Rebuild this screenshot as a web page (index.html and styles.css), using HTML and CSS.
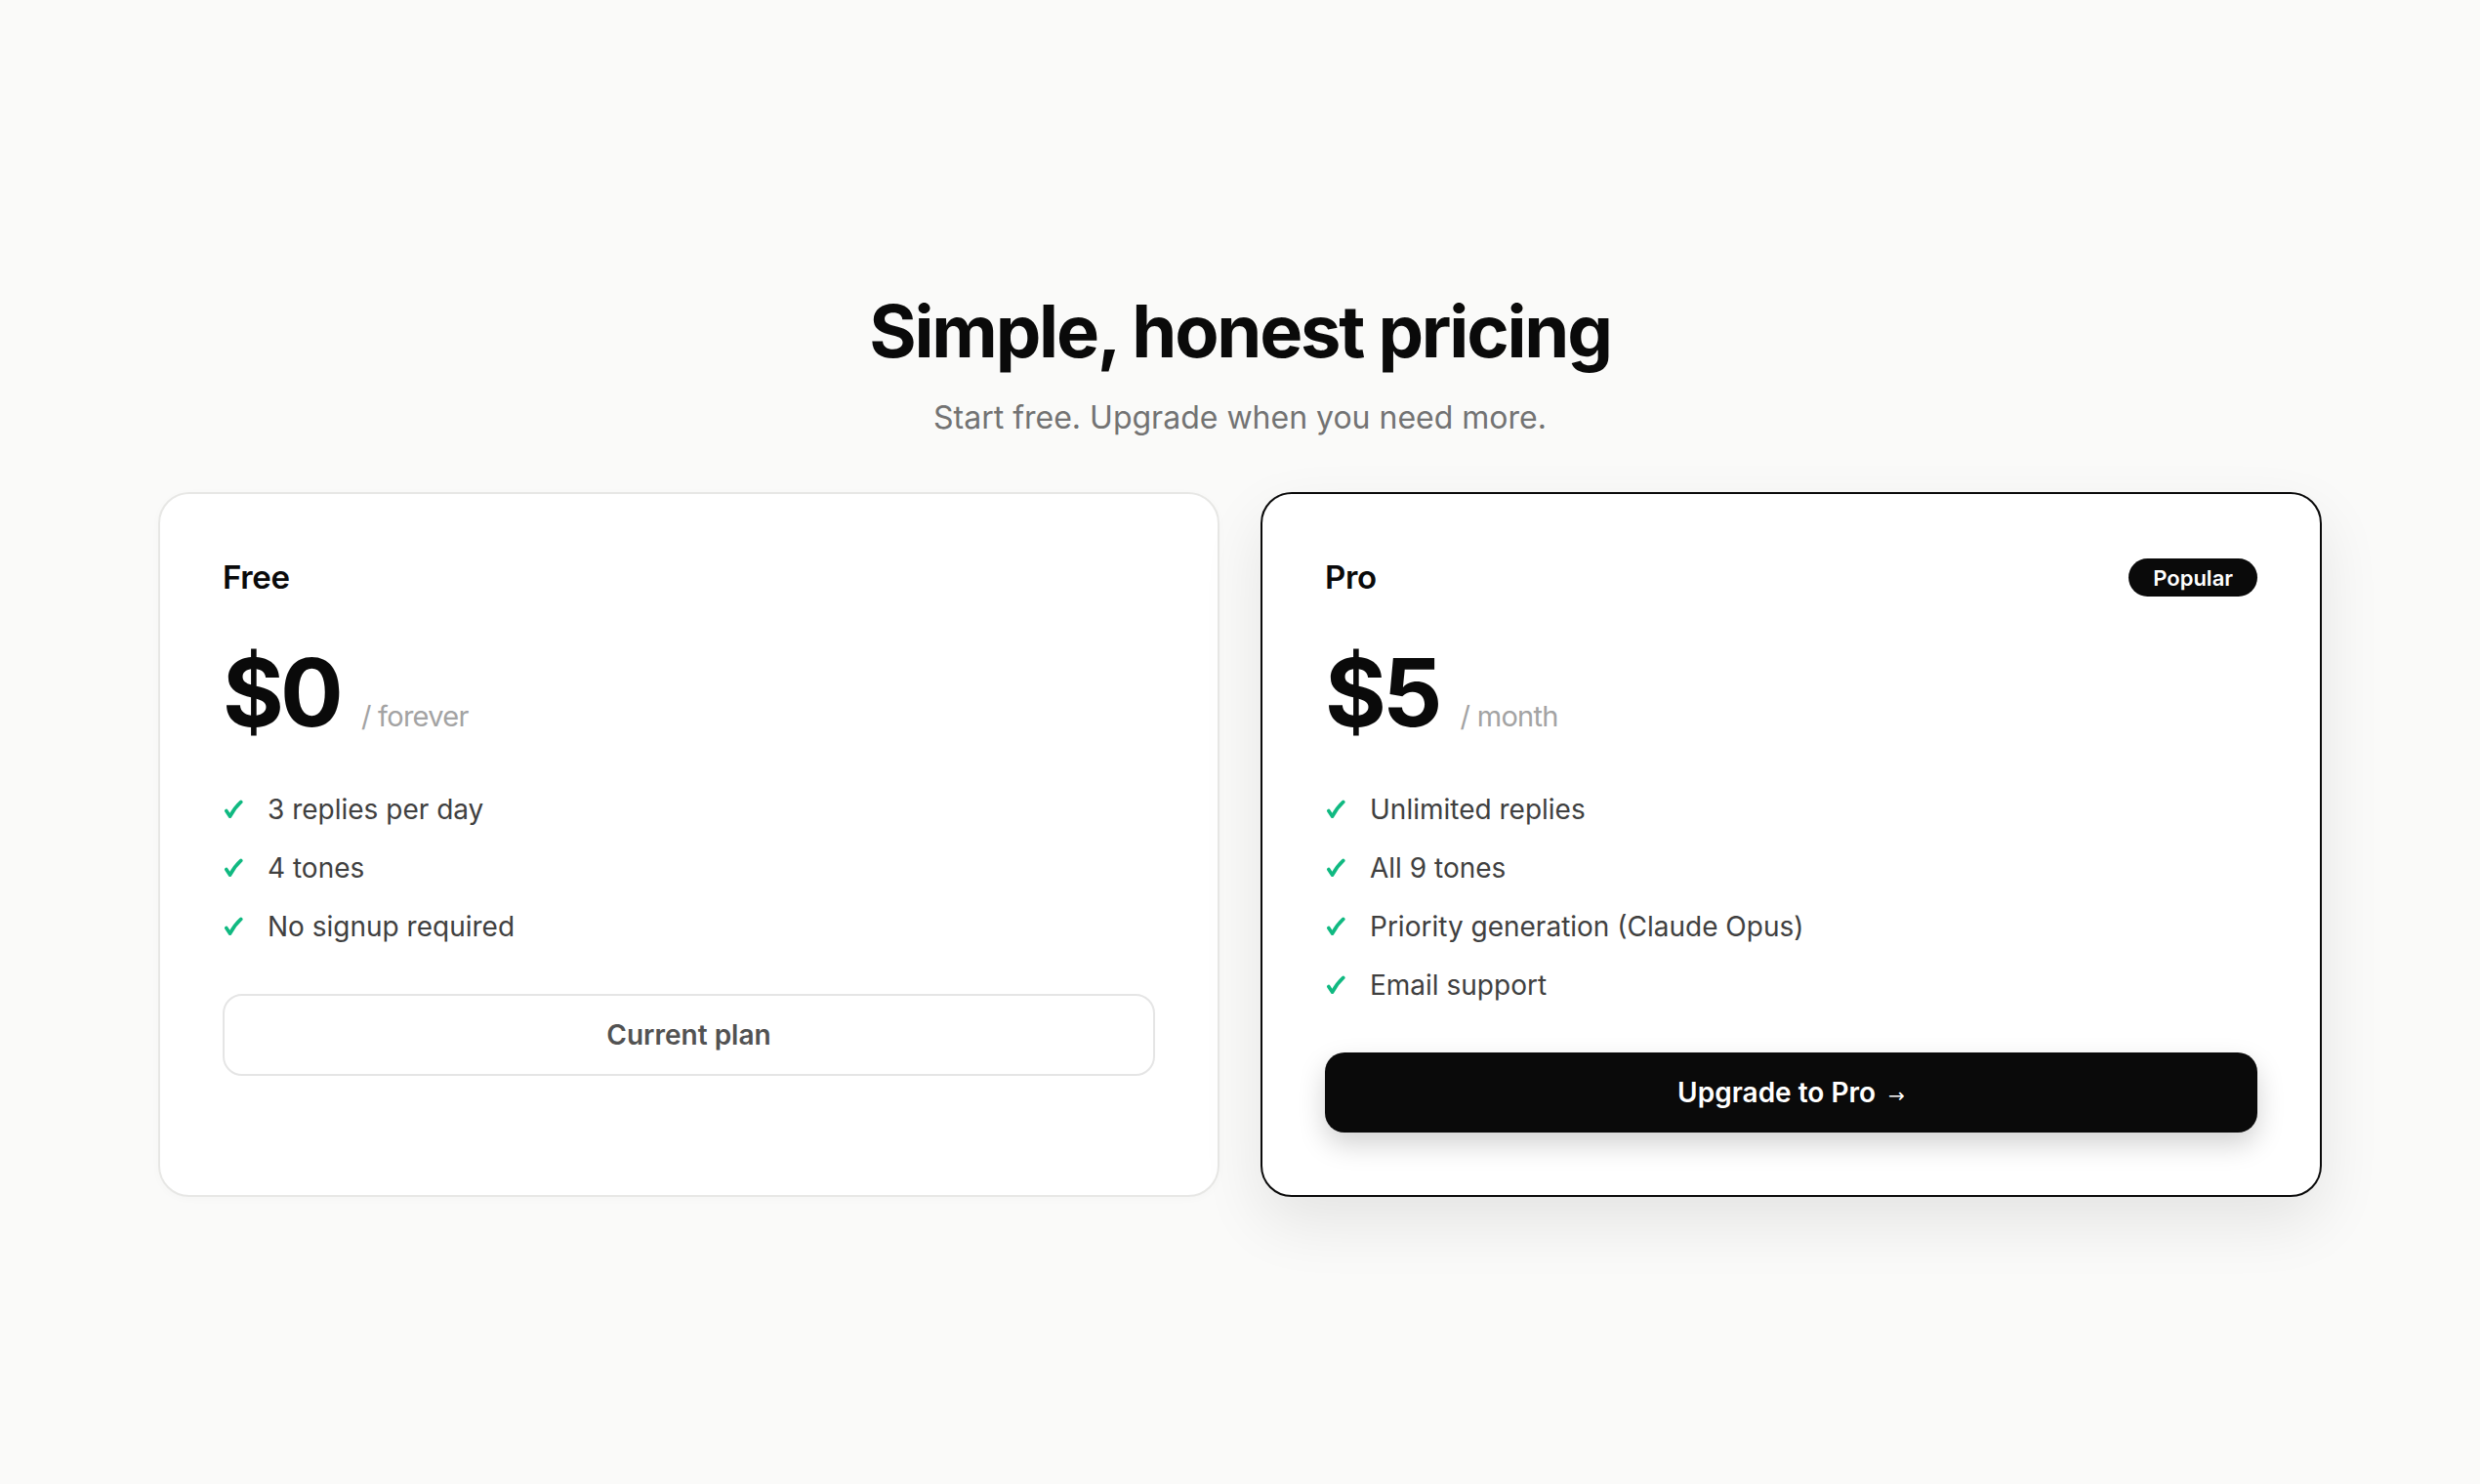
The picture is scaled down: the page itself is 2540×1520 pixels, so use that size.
FILE: index.html
```html
<!DOCTYPE html>
<html lang="en">
<head>
<meta charset="utf-8">
<title>Pricing</title>
<link rel="stylesheet" href="styles.css">
</head>
<body>
  <main class="page">
    <header class="intro">
      <h1 class="title">Simple, honest pricing</h1>
      <p class="subtitle">Start free. Upgrade when you need more.</p>
    </header>

    <section class="plans">
      <article class="card">
        <div class="card-head">
          <h2 class="plan-name">Free</h2>
        </div>
        <div class="price">
          <span class="amount">$0</span>
          <span class="period">/ forever</span>
        </div>
        <ul class="features">
          <li><svg class="check" viewBox="0 0 20 20" aria-hidden="true"><path d="M2.8 11.4 L6.6 17.2 Q11 8.5 17.8 2.4"/></svg><span>3 replies per day</span></li>
          <li><svg class="check" viewBox="0 0 20 20" aria-hidden="true"><path d="M2.8 11.4 L6.6 17.2 Q11 8.5 17.8 2.4"/></svg><span>4 tones</span></li>
          <li><svg class="check" viewBox="0 0 20 20" aria-hidden="true"><path d="M2.8 11.4 L6.6 17.2 Q11 8.5 17.8 2.4"/></svg><span>No signup required</span></li>
        </ul>
        <button class="btn btn-outline" type="button">Current plan</button>
      </article>

      <article class="card card-pro">
        <div class="card-head">
          <h2 class="plan-name">Pro</h2>
          <span class="badge">Popular</span>
        </div>
        <div class="price">
          <span class="amount">$5</span>
          <span class="period">/ month</span>
        </div>
        <ul class="features">
          <li><svg class="check" viewBox="0 0 20 20" aria-hidden="true"><path d="M2.8 11.4 L6.6 17.2 Q11 8.5 17.8 2.4"/></svg><span>Unlimited replies</span></li>
          <li><svg class="check" viewBox="0 0 20 20" aria-hidden="true"><path d="M2.8 11.4 L6.6 17.2 Q11 8.5 17.8 2.4"/></svg><span>All 9 tones</span></li>
          <li><svg class="check" viewBox="0 0 20 20" aria-hidden="true"><path d="M2.8 11.4 L6.6 17.2 Q11 8.5 17.8 2.4"/></svg><span>Priority generation (Claude Opus)</span></li>
          <li><svg class="check" viewBox="0 0 20 20" aria-hidden="true"><path d="M2.8 11.4 L6.6 17.2 Q11 8.5 17.8 2.4"/></svg><span>Email support</span></li>
        </ul>
        <button class="btn btn-solid" type="button">Upgrade to Pro <span class="arrow">→</span></button>
      </article>
    </section>
  </main>
</body>
</html>
```

FILE: styles.css
```css
* { box-sizing: border-box; }

html, body {
  margin: 0;
  padding: 0;
  background: #fafaf9;
}

body {
  font-family: Inter, "Noto Sans", "Liberation Sans", sans-serif;
  color: #0a0a0a;
  min-height: 1520px;
}

.page {
  width: 2216px;
  margin: 0 auto;
  padding-top: 299px;
}

.intro {
  text-align: center;
}

.title {
  margin: 0;
  font-size: 74px;
  line-height: 81px;
  font-weight: 700;
  letter-spacing: -0.03em;
  color: #0a0a0a;
}

.subtitle {
  margin: 25px 0 0;
  font-size: 32px;
  line-height: 46px;
  font-weight: 400;
  color: #737373;
}

.plans {
  margin-top: 53px;
  display: grid;
  grid-template-columns: 1fr 1fr;
  gap: 42px;
}

.card {
  background: #ffffff;
  border: 2px solid #e7e7e5;
  border-radius: 32px;
  padding: 64px;
  display: flex;
  flex-direction: column;
  box-shadow: 0 2px 10px rgba(0, 0, 0, 0.025);
}

.card-pro {
  border-color: #0a0a0a;
  box-shadow: 0 26px 64px rgba(0, 0, 0, 0.09);
}

.card-head {
  display: flex;
  align-items: center;
  justify-content: space-between;
  height: 43px;
}

.plan-name {
  margin: 0;
  font-size: 33px;
  line-height: 43px;
  font-weight: 600;
  letter-spacing: -0.01em;
  color: #0a0a0a;
}

.badge {
  display: inline-flex;
  align-items: center;
  height: 39px;
  padding: 0 25px;
  border-radius: 999px;
  background: #0a0a0a;
  color: #ffffff;
  font-size: 22px;
  font-weight: 600;
}

.price {
  margin-top: 48px;
  display: flex;
  align-items: baseline;
}

.amount {
  font-size: 96px;
  line-height: 96px;
  font-weight: 700;
  letter-spacing: -0.04em;
  color: #0a0a0a;
}

.period {
  margin-left: 22px;
  font-size: 29px;
  font-weight: 400;
  letter-spacing: -0.025em;
  color: #a3a3a3;
}

.features {
  list-style: none;
  margin: 51px 0 0;
  padding: 0;
  display: flex;
  flex-direction: column;
  gap: 18px;
}

.features li {
  display: flex;
  align-items: center;
  height: 42px;
  font-size: 28px;
  line-height: 42px;
  color: #404040;
}

.check {
  width: 20px;
  height: 20px;
  flex: none;
  margin-left: 1px;
  margin-right: 25px;
  fill: none;
  stroke: #10b981;
  stroke-width: 3.6;
  stroke-linecap: round;
  stroke-linejoin: round;
}

.btn {
  margin-top: 48px;
  height: 82px;
  width: 100%;
  border-radius: 20px;
  font-family: Inter, "Noto Sans", "Liberation Sans", sans-serif;
  font-size: 28px;
  font-weight: 600;
  cursor: pointer;
}

.btn-outline {
  height: 84px;
  background: #ffffff;
  border: 2px solid #e5e5e5;
  color: #525252;
}

.btn-solid {
  background: #0a0a0a;
  border: none;
  color: #ffffff;
  box-shadow: 0 12px 28px rgba(0, 0, 0, 0.18);
}

.arrow {
  font-family: "DejaVu Sans", sans-serif;
  font-size: 20px;
  font-weight: 400;
  margin-left: 6px;
}
```
